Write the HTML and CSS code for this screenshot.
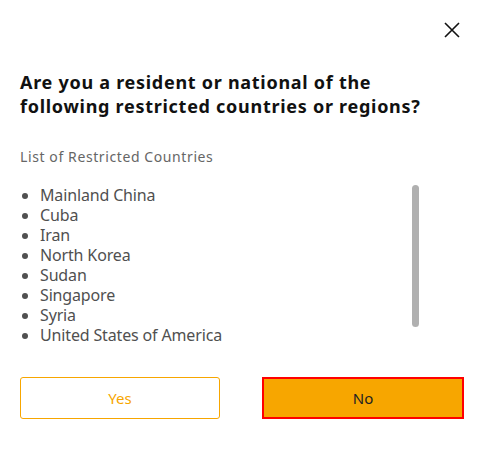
FILE: index.html
```html
<!DOCTYPE html>
<html lang="en">
<head>
    <meta charset="UTF-8">
    <meta name="viewport" content="width=device-width, initial-scale=1.0">
    <title>Restricted Countries</title>
    <link rel="stylesheet" href="styles.css">
</head>
<body>

<div class="modal">
    <div class="modal-top">
        <button class="close-btn" aria-label="Close">
            <svg width="16" height="16" viewBox="0 0 16 16">
                <path d="M1 1 L15 15 M15 1 L1 15" stroke="#111" stroke-width="1.6" fill="none"/>
            </svg>
        </button>
    </div>

    <h1 class="title">Are you a resident or national of the following restricted countries or regions?</h1>

    <p class="subtitle">List of Restricted Countries</p>

    <div class="list-wrap">
        <ul class="country-list">
            <li>Mainland China</li>
            <li>Cuba</li>
            <li>Iran</li>
            <li>North Korea</li>
            <li>Sudan</li>
            <li>Singapore</li>
            <li>Syria</li>
            <li>United States of America</li>
        </ul>
        <div class="scroll-thumb"></div>
    </div>

    <div class="actions">
        <button class="btn btn-yes">Yes</button>
        <button class="btn btn-no">No</button>
    </div>
</div>

</body>
</html>
```

FILE: styles.css
```css
:root {
    --orange: #f7a600;
    --text-color: #111;
    --muted: #505050;
}

body {
    margin: 0;
    background: #fff;
    font-family: 'Noto Sans', 'Open Sans', sans-serif;
    color: var(--text-color);
}

.modal {
    padding: 0 17px 0 20px;
}

.modal-top {
    display: flex;
    justify-content: flex-end;
    padding-top: 22px;
    padding-right: 4px;
}

.close-btn {
    background: none;
    border: none;
    padding: 0;
    width: 16px;
    height: 16px;
    cursor: pointer;
}

.title {
    font-size: 18px;
    font-weight: bold;
    line-height: 24px;
    letter-spacing: 0.72px;
    margin: 32px 0 0;
}

.subtitle {
    font-size: 14px;
    color: #666;
    letter-spacing: 0.6px;
    margin: 29px 0 0;
    line-height: 20px;
}

.list-wrap {
    display: flex;
    justify-content: space-between;
    margin-top: 18px;
    padding-right: 45px;
}

.country-list {
    margin: 0;
    padding-left: 20px;
    font-size: 16px;
    line-height: 20px;
    letter-spacing: -0.15px;
    color: var(--muted);
}

.scroll-thumb {
    width: 7px;
    height: 142px;
    background: #b0b0b0;
    border-radius: 4px;
}

.actions {
    display: flex;
    justify-content: space-between;
    margin-top: 32px;
}

.btn {
    font-family: inherit;
    font-size: 15px;
    height: 42px;
    cursor: pointer;
}

.btn-yes {
    width: 200px;
    background: #fff;
    color: var(--orange);
    border: 1px solid var(--orange);
    border-radius: 3px;
}

.btn-no {
    width: 202px;
    background: var(--orange);
    color: #222;
    border: 2px solid #ff0000;
    border-radius: 0;
}
```
